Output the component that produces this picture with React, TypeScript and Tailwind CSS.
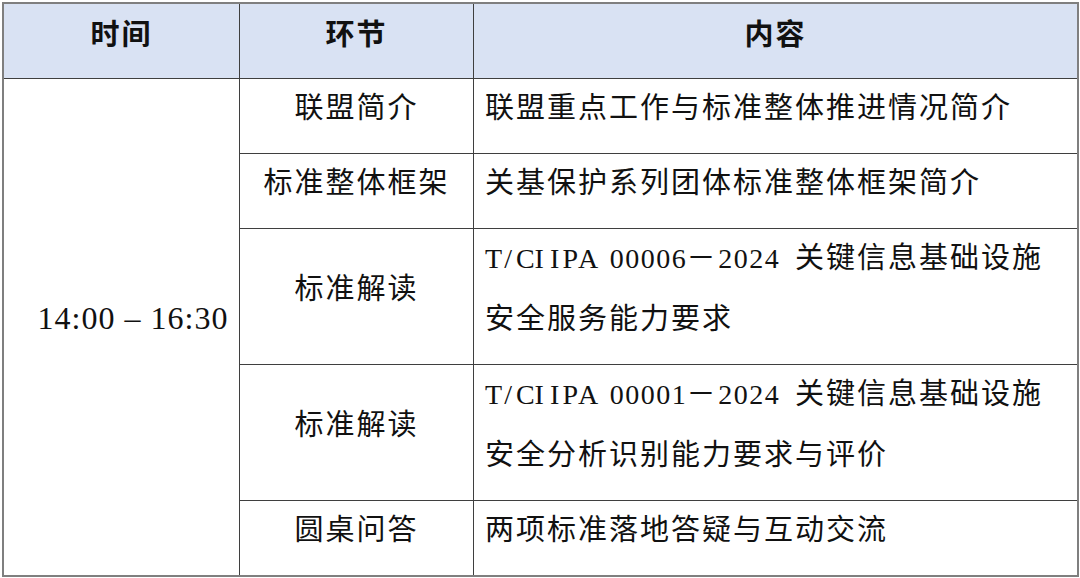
import React from "react";

const cjk = '"Noto Sans CJK SC", "Noto Sans", sans-serif';

function Mono({ text }: { text: string }) {
  return (
    <>
      {text.split("").map((c, i) => (
        <span
          key={i}
          className="inline-block w-[15.5px] text-center font-['Liberation_Serif',serif] text-[28px] leading-none tracking-normal"
        >
          {c === " " ? "\u00a0" : c}
        </span>
      ))}
    </>
  );
}

function Row({
  name,
  lines,
  last,
}: {
  name: string;
  lines: React.ReactNode[];
  last?: boolean;
}) {
  return (
    <div className={`flex ${last ? "" : "border-b border-[#3f3f3f]"}`}>
      <div className="w-[234px] shrink-0 border-r border-[#3f3f3f] pb-[17px] flex items-center justify-center">
        <span className="leading-[61px] -mt-[4px]">{name}</span>
      </div>
      <div className="flex-1 pl-[11px] pb-[17px]">
        <div className="-mt-[4px]">
          {lines.map((l, i) => (
            <div key={i} className="h-[61px] leading-[61px] whitespace-nowrap">
              {l}
            </div>
          ))}
        </div>
      </div>
    </div>
  );
}

export default function App() {
  return (
    <div className="w-[1080px] h-[578px] bg-white pt-[2px] pl-[2px]">
      <div
        className="w-[1077px] border-2 border-[#7f7f7f] text-[29px] tracking-[2px] text-[#111]"
        style={{ fontFamily: cjk }}
      >
        <div className="flex h-[75px] bg-[#d9e2f3] border-b border-[#3f3f3f] font-bold">
          <div className="w-[236px] shrink-0 border-r border-[#3f3f3f] pb-[17px] flex items-center justify-center">
            时间
          </div>
          <div className="w-[234px] shrink-0 border-r border-[#3f3f3f] pb-[17px] flex items-center justify-center">
            环节
          </div>
          <div className="flex-1 pb-[17px] flex items-center justify-center">内容</div>
        </div>
        <div className="flex">
          <div className="w-[236px] shrink-0 border-r border-[#3f3f3f] pb-[18px] pl-[23px] flex items-center justify-center">
            <span className="font-['Liberation_Serif',serif] text-[32px] tracking-[1px] whitespace-nowrap">
              14:00 – 16:30
            </span>
          </div>
          <div className="flex-1 flex flex-col">
            <Row name="联盟简介" lines={["联盟重点工作与标准整体推进情况简介"]} />
            <Row name="标准整体框架" lines={["关基保护系列团体标准整体框架简介"]} />
            <Row
              name="标准解读"
              lines={[
                <>
                  <Mono text="T/CIIPA 00006" />
                  －
                  <Mono text="2024 " />
                  关键信息基础设施
                </>,
                "安全服务能力要求",
              ]}
            />
            <Row
              name="标准解读"
              lines={[
                <>
                  <Mono text="T/CIIPA 00001" />
                  －
                  <Mono text="2024 " />
                  关键信息基础设施
                </>,
                "安全分析识别能力要求与评价",
              ]}
            />
            <Row name="圆桌问答" lines={["两项标准落地答疑与互动交流"]} last />
          </div>
        </div>
      </div>
    </div>
  );
}
